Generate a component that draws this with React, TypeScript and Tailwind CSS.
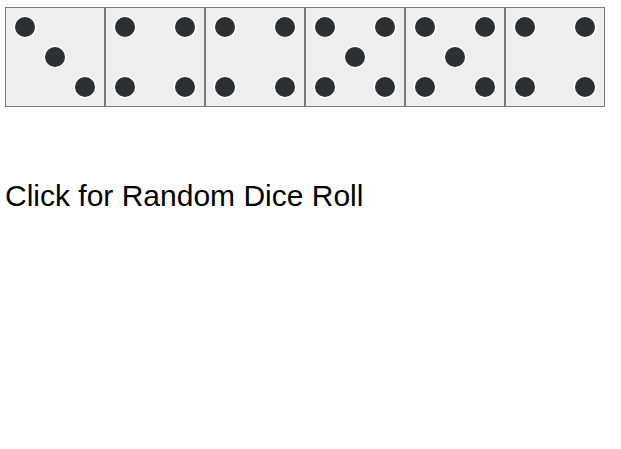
import React from 'react';

// pip positions on a 3x3 grid, index = row * 3 + col
const FACES: Record<number, number[]> = {
  1: [4],
  2: [0, 8],
  3: [0, 4, 8],
  4: [0, 2, 6, 8],
  5: [0, 2, 4, 6, 8],
  6: [0, 2, 3, 5, 6, 8],
};

const ROLL = [3, 4, 4, 5, 5, 4];

const Die: React.FC<{ value: number }> = ({ value }) => {
  const pips = FACES[value] || [];
  return (
    <div className="w-[100px] h-[100px] border border-[#7b7b7b] bg-[#eeeeee] p-[9px] grid grid-cols-[20px_20px_20px] grid-rows-[20px_20px_20px] gap-[10px]">
      {Array.from({ length: 9 }).map((_, i) => (
        <div key={i} className="w-5 h-5">
          {pips.includes(i) && (
            <div className="w-5 h-5 rounded-full bg-[#2c3033] shadow-[0_0_2px_1px_#ffffff]" />
          )}
        </div>
      ))}
    </div>
  );
};

export default function App() {
  return (
    <div className="min-h-[449px] bg-white pl-[5px] pt-[7px]" style={{ fontFamily: '"Liberation Sans", Arial, sans-serif' }}>
      {/* Dice row */}
      <div className="flex">
        {ROLL.map((v, i) => (
          <Die key={i} value={v} />
        ))}
      </div>

      {/* Roll button text */}
      <div className="mt-[72px] text-[30px] leading-[34px] text-black cursor-pointer">
        Click for Random Dice Roll
      </div>
    </div>
  );
}
